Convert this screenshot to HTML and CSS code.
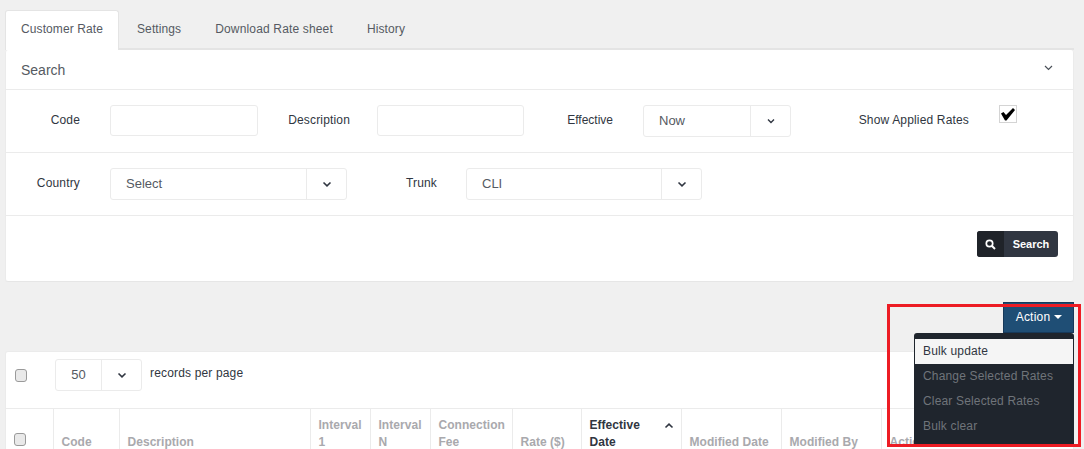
FILE: index.html
```html
<!DOCTYPE html>
<html lang="en">
<head>
<meta charset="utf-8">
<title>Customer Rate</title>
<link rel="stylesheet" href="styles.css">
</head>
<body>
<div class="page">
  <ul class="tabs">
    <li class="tab tab-active">Customer Rate</li>
    <li class="tab">Settings</li>
    <li class="tab tab-long">Download Rate sheet</li>
    <li class="tab">History</li>
  </ul>

  <section class="panel search-panel">
    <header class="panel-head">
      <span class="panel-title">Search</span>
      <svg class="panel-toggle" width="9" height="6" viewBox="0 0 9 6"><path d="M1 1l3.5 3.5L8 1" fill="none" stroke="#4a5058" stroke-width="1.2"/></svg>
    </header>
    <div class="form-row">
      <label class="lbl lbl-code">Code</label>
      <input class="input input-a" type="text">
      <label class="lbl lbl-desc">Description</label>
      <input class="input input-b" type="text">
      <label class="lbl lbl-eff">Effective</label>
      <div class="select select-now"><span class="select-value">Now</span><span class="select-caret"><svg width="8" height="6" viewBox="0 0 8 6"><path d="M1 1.500l3 3 3-3" fill="none" stroke="#303641" stroke-width="1.400"/></svg></span></div>
      <label class="lbl lbl-show">Show Applied Rates</label>
      <span class="tick"><svg width="14" height="13" viewBox="0 0 14 13"><path d="M0 5.500l2.500-1.500 2.500 3L12 0l2 2-8.500 10.500h-1.500z" fill="#000"/></svg></span>
    </div>
    <div class="form-row">
      <label class="lbl lbl-code">Country</label>
      <div class="select select-country"><span class="select-value">Select</span><span class="select-caret"><svg width="10" height="7" viewBox="0 0 10 7"><path d="M1.500 1.500l3.500 3.300 3.500-3.300" fill="none" stroke="#303641" stroke-width="1.600"/></svg></span></div>
      <label class="lbl lbl-trunk">Trunk</label>
      <div class="select select-trunk"><span class="select-value">CLI</span><span class="select-caret"><svg width="10" height="7" viewBox="0 0 10 7"><path d="M1.500 1.500l3.500 3.300 3.500-3.300" fill="none" stroke="#303641" stroke-width="1.600"/></svg></span></div>
    </div>
    <div class="form-row form-actions">
      <button class="search-btn" type="button">
        <span class="search-ico"><svg width="11" height="11" viewBox="0 0 11 11"><circle cx="4.500" cy="4.500" r="3.200" fill="none" stroke="#fff" stroke-width="1.700"/><path d="M7 7l3 3" stroke="#fff" stroke-width="2"/></svg></span>
        <span class="search-txt">Search</span>
      </button>
    </div>
  </section>

  <div class="action-row">
    <div class="action-wrap">
      <button class="action-btn" type="button">Action<span class="caret"></span></button>
      <ul class="menu">
        <li class="menu-item menu-item-hover">Bulk update</li>
        <li class="menu-item">Change Selected Rates</li>
        <li class="menu-item">Clear Selected Rates</li>
        <li class="menu-item">Bulk clear</li>
      </ul>
    </div>
  </div>

  <section class="panel table-panel">
    <div class="table-top">
      <input class="cb cb-top" type="checkbox">
      <div class="select select-len"><span class="select-value">50</span><span class="select-caret"><svg width="10" height="7" viewBox="0 0 10 7"><path d="M1.500 1.500l3.500 3.300 3.500-3.300" fill="none" stroke="#303641" stroke-width="1.600"/></svg></span></div>
      <span class="records">records per page</span>
    </div>
    <table class="rates">
      <colgroup>
        <col class="c-check"><col class="c-code"><col class="c-desc"><col class="c-int"><col class="c-int"><col class="c-fee"><col class="c-rate"><col class="c-date"><col class="c-mod"><col class="c-mod"><col class="c-act">
      </colgroup>
      <thead>
        <tr>
          <th class="th-check"><input class="cb" type="checkbox"></th>
          <th>Code</th>
          <th>Description</th>
          <th>Interval 1</th>
          <th>Interval N</th>
          <th>Connection Fee</th>
          <th>Rate ($)</th>
          <th class="th-sorted">Effective Date<svg class="sort-ico" width="10" height="7" viewBox="0 0 10 7"><path d="M1.500 5.500l3.500-3.300 3.500 3.300" fill="none" stroke="#303641" stroke-width="1.600"/></svg></th>
          <th>Modified Date</th>
          <th>Modified By</th>
          <th>Action</th>
        </tr>
      </thead>
    </table>
  </section>

  <div class="highlight"></div>
</div>
</body>
</html>
```

FILE: styles.css
```css
* { box-sizing: border-box; }
html, body { margin: 0; height: 449px; overflow: hidden; }
body {
  background: #f0f0f0;
  font-family: "Liberation Sans", Arial, sans-serif;
  font-size: 12px;
  line-height: 17px;
  color: #333;
  letter-spacing: 0.16px;
}
.page { position: relative; height: 449px; padding: 10px 10px 0 5px; overflow: hidden; }

.tabs { list-style: none; display: flex; gap: 2px; margin: 0; padding: 0; height: 40px; border-bottom: 2px solid #e4e4e4; }
.tab { height: 38px; padding: 11px 16px 0; color: #555a62; letter-spacing: 0.1px; }
.tab-long { letter-spacing: 0.16px; }
.tab-active { height: 40px; background: #fff; border: 1px solid #e4e4e4; border-bottom: 0; border-radius: 3px 3px 0 0; padding: 10px 15px 0; }

.panel { background: #fff; border: 1px solid #ebebeb; border-radius: 3px; }
.search-panel { border-top: 0; border-bottom-color: #e6e6e6; }
.panel-head { height: 40px; display: flex; align-items: center; justify-content: space-between; padding: 2px 20px 0 15px; border-bottom: 1px solid #ebebeb; }
.panel-title { font-size: 14px; color: #555a62; letter-spacing: 0; }
.panel-toggle { margin: -5px 0 0 0; }

.form-row { display: flex; align-items: flex-start; padding: 15px 0; border-bottom: 1px solid #ebebeb; }
.form-actions { justify-content: flex-end; border-bottom: 0; padding: 15px 15px 24px 0; }

.lbl { display: block; height: 31px; line-height: 30px; text-align: right; margin-right: 30px; color: #303641; white-space: nowrap; flex: none; }
.lbl-code { width: 74px; }
.lbl-desc { width: 92px; margin-right: 27px; }
.lbl-eff { width: 89px; letter-spacing: 0; }
.lbl-show { width: 178px; }
.lbl-trunk { width: 90px; margin-right: 29px; }

.input { display: block; height: 31px; padding: 0; background: #fff; border: 1px solid #ebebeb; border-radius: 3px; flex: none; }
.input-a { width: 148px; }
.input-b { width: 147px; }

.select { display: flex; height: 32px; background: #fff; border: 1px solid #ebebeb; border-radius: 3px; flex: none; font-size: 13px; color: #555a62; letter-spacing: 0; }
.select-value { flex: 1; padding-left: 15px; line-height: 29px; }
.select-caret { width: 40px; border-left: 1px solid #ebebeb; display: flex; align-items: center; justify-content: center; flex: none; }
.select-now { width: 148px; }
.select-country { width: 237px; }
.select-trunk { width: 236px; }
.select-len { width: 87px; }
.select-len .select-value { padding: 0; text-align: center; }

.tick { display: flex; align-items: center; justify-content: center; width: 18px; height: 18px; background: #fff; border: 1px solid #d4d4d4; flex: none; }

.search-btn { display: flex; height: 26px; width: 81px; padding: 0; border: 0; border-radius: 3px; overflow: hidden; background: #303641; color: #fff; font: bold 11px/26px "Liberation Sans", Arial, sans-serif; letter-spacing: 0; }
.search-ico { width: 27px; height: 26px; background: #1f2329; display: flex; align-items: center; justify-content: center; }
.search-txt { flex: 1; text-align: center; }

.action-row { display: flex; justify-content: flex-end; height: 69px; padding-top: 20px; }
.action-wrap { position: relative; }
.action-btn { display: block; width: 71px; height: 31px; padding: 0 0 0 1px; background: #1f4e75; border: 1px solid #17395a; color: #fff; font: 12px/29px "Liberation Sans", Arial, sans-serif; letter-spacing: 0.2px; }
.caret { display: inline-block; margin-left: 4px; vertical-align: 2px; border-top: 4px solid #fff; border-left: 4px solid transparent; border-right: 4px solid transparent; }

.menu { position: absolute; z-index: 2; top: 31px; right: 0; width: 160px; height: 114px; list-style: none; margin: 0; padding: 6px 1px 0; background: #1f252d; border-radius: 3px; }
.menu-item { height: 25px; padding: 0 8px; line-height: 25px; color: #6f747a; }
.menu-item-hover { background: #f5f5f5; color: #303641; }

.table-panel { border-bottom: 0; }
.table-top { display: flex; align-items: flex-start; height: 57px; padding: 7px 0 0 9px; border-bottom: 1px solid #ebebeb; }
.cb { appearance: none; -webkit-appearance: none; display: block; width: 12px; height: 13px; margin: 0; border: 1px solid #9a9a9a; border-radius: 3px; background: #e9e9e9; }
.cb-top { margin-top: 10px; margin-right: 28px; }
.records { margin-left: 8px; color: #303641; line-height: 29px; }

.rates { width: 1067px; table-layout: fixed; border-collapse: collapse; }
.c-check { width: 47px; }
.c-code { width: 66px; }
.c-desc { width: 191px; }
.c-int { width: 60px; }
.c-fee { width: 82px; }
.c-rate { width: 69px; }
.c-date { width: 100px; }
.c-mod { width: 100px; }
.c-act { width: 192px; }
.rates th { padding: 8px; vertical-align: bottom; text-align: left; font-weight: bold; color: #a9a9ad; letter-spacing: 0.04px; border-right: 1px solid #ebebeb; }
.rates th:last-child { border-right: 0; }
.rates .th-check { padding: 0 0 13px 8px; }
.rates .th-sorted { position: relative; padding-right: 30px; color: #303641; }
.sort-ico { position: absolute; top: 13px; right: 7px; }

.highlight { position: absolute; z-index: 3; left: 887px; top: 304px; width: 194px; height: 143px; border: 3px solid #ed1c24; pointer-events: none; }
```
